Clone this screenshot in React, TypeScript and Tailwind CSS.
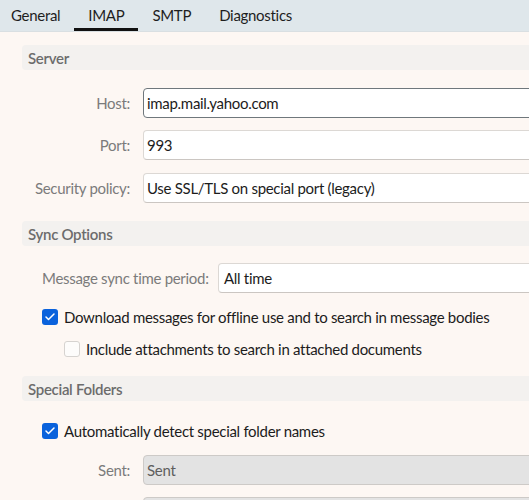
import { Check } from "lucide-react";

type FieldRowProps = {
  label: string;
  value: string;
  focused?: boolean;
  disabled?: boolean;
  className?: string;
};

function FieldRow({ label, value, focused, disabled, className }: FieldRowProps) {
  return (
    <div className={"flex h-[30px] shrink-0 items-center whitespace-nowrap " + (className ?? "")}>
      <span className="w-[131px] shrink-0 pr-[1px] text-right text-[#7b7b7b]">{label}</span>
      <div
        className={
          "ml-[12px] flex h-[30px] w-[420px] shrink-0 items-center rounded-[4px] border px-[3px] " +
          (focused
            ? "border-[#6f777c] bg-white text-[#1c1c1c]"
            : disabled
              ? "border-[#cdcac7] bg-[#e3e3e3] text-[#5e5e5e]"
              : "border-[#dcd8d4] border-b-[#cbc6c2] bg-white text-[#1c1c1c]")
        }
      >
        {value}
      </div>
    </div>
  );
}

function SectionHeader({ title, className }: { title: string; className?: string }) {
  return (
    <div
      className={
        "ml-[22px] flex h-[25px] w-[520px] shrink-0 items-center rounded-l-[4px] bg-[#f3f1ef] pl-[6px] font-semibold text-[#6c6c6c] " +
        (className ?? "")
      }
    >
      {title}
    </div>
  );
}

function CheckRow({
  label,
  checked,
  className
}: {
  label: string;
  checked?: boolean;
  className?: string;
}) {
  return (
    <div className={"flex h-[16px] shrink-0 items-center whitespace-nowrap " + (className ?? "")}>
      <span
        className={
          "flex h-[16px] w-[16px] shrink-0 items-center justify-center rounded-[3px] " +
          (checked ? "bg-[#0a62dc]" : "border border-[#d6d3d0] bg-[#fdfcfb]")
        }
      >
        {checked ? <Check className="h-[12px] w-[12px] text-white" strokeWidth={3} /> : null}
      </span>
      <span className="ml-[6px] text-[#1c1c1c]">{label}</span>
    </div>
  );
}

export default function App() {
  const tabs = ["General", "IMAP", "SMTP", "Diagnostics"];

  return (
    <div
      className="flex h-[500px] w-[529px] flex-col overflow-hidden bg-[#fdf7f3] text-[15px] leading-[20px] tracking-[-0.3px]"
      style={{ fontFamily: 'Lato, "Noto Sans", sans-serif' }}
    >
      <div className="flex h-[32px] shrink-0 items-end border-b border-[#d9dfe2] bg-[#dfe7eb]">
        {tabs.map((tab, i) => (
          <div
            key={tab}
            className={
              "flex h-[31px] flex-col " + (i === 0 ? "pl-[11px] pr-[14px]" : "px-[14px]")
            }
          >
            <span className="flex h-[28px] items-center pt-[2px] text-[#1e1e1e]">{tab}</span>
            <span
              className={
                "-mx-[14px] h-[3px] " + (tab === "IMAP" ? "bg-[#111111]" : "bg-transparent")
              }
            />
          </div>
        ))}
      </div>

      <SectionHeader title="Server" className="mt-[13px]" />
      <FieldRow label="Host:" value="imap.mail.yahoo.com" focused className="mt-[18px]" />
      <FieldRow label="Port:" value="993" className="mt-[12px]" />
      <FieldRow
        label="Security policy:"
        value="Use SSL/TLS on special port (legacy)"
        className="mt-[13px]"
      />

      <SectionHeader title="Sync Options" className="mt-[18px]" />
      <div className="mt-[17px] flex h-[30px] shrink-0 items-center whitespace-nowrap">
        <span className="ml-[42px] w-[166px] shrink-0 text-[#7b7b7b]">Message sync time period:</span>
        <div className="ml-[10px] flex h-[30px] w-[420px] shrink-0 items-center rounded-[4px] border border-[#dcd8d4] border-b-[#cbc6c2] bg-white px-[5px] text-[#1c1c1c]">
          All time
        </div>
      </div>
      <CheckRow
        label="Download messages for offline use and to search in message bodies"
        checked
        className="ml-[42px] mt-[16px]"
      />
      <CheckRow
        label="Include attachments to search in attached documents"
        className="ml-[64px] mt-[16px]"
      />

      <SectionHeader title="Special Folders" className="mt-[19px]" />
      <CheckRow
        label="Automatically detect special folder names"
        checked
        className="ml-[42px] mt-[22px]"
      />
      <FieldRow label="Sent:" value="Sent" disabled className="mt-[16px]" />
      <FieldRow label="" value="" disabled className="mt-[12px]" />
    </div>
  );
}
